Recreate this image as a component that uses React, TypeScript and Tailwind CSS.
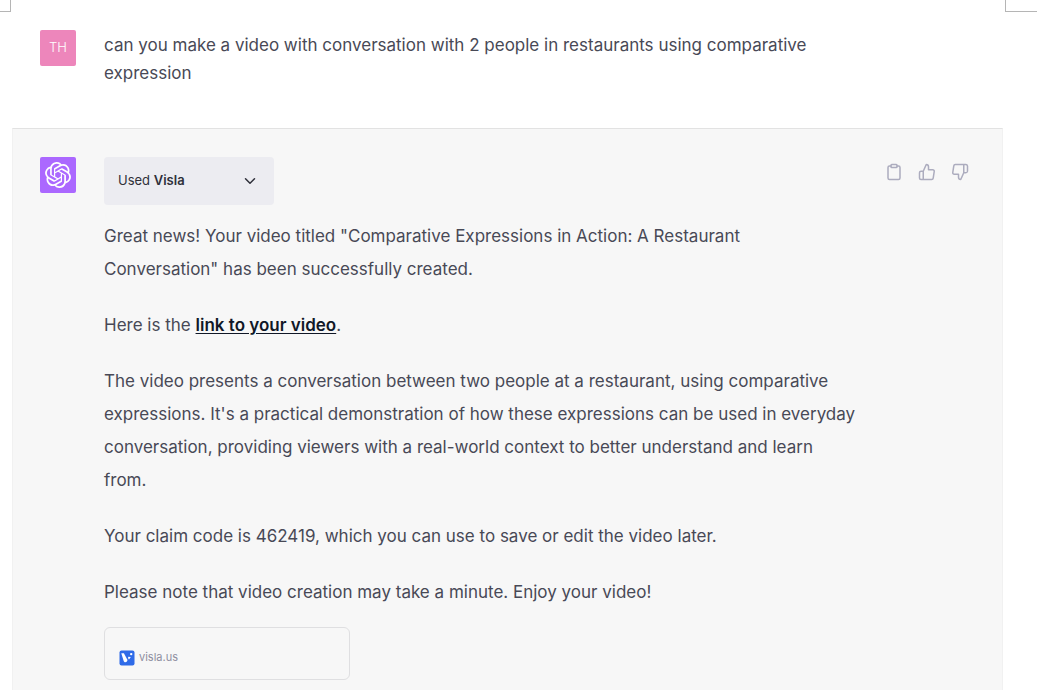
import React from "react";
import { FiChevronDown, FiClipboard, FiThumbsDown, FiThumbsUp } from "react-icons/fi";
import { SiOpenai } from "react-icons/si";

interface MessageProps {
    avatar: React.ReactNode;
    children: React.ReactNode;
}

const actions = [
    { label: "Copy", Icon: FiClipboard },
    { label: "Good response", Icon: FiThumbsUp },
    { label: "Bad response", Icon: FiThumbsDown },
];

const PageCorners: React.FC = () => (
    <div className="flex justify-between pr-[25px]">
        <div className="h-3 w-[11px] border-b border-r border-[#b5b5b5]" />
        <div className="h-3 w-8 border-b border-l border-[#b5b5b5]" />
    </div>
);

const Message: React.FC<MessageProps> = ({ avatar, children }) => (
    <div className="flex items-start gap-7">
        {avatar}
        {children}
    </div>
);

const VislaLogo: React.FC = () => (
    <svg viewBox="0 0 16 16" className="size-4" aria-hidden="true">
        <rect x="0.5" y="0.5" width="15" height="15" rx="2" fill="#2f6be8" />
        <path d="M2.3 3.2h2.6l3.6 6.9c-.5 1.5-1.1 2.2-2.1 2.2-.8 0-1.3-.5-1.7-1.4z" fill="#fff" />
        <path d="M9.3 6.7l2.5.3-1.8 2.6c-.8-.9-1.1-1.8-.7-2.9z" fill="#fff" />
        <circle cx="12.2" cy="4.1" r="1.2" fill="#fff" />
    </svg>
);

const App: React.FC = () => {
    return (
        <div className="bg-white font-['Inter','Liberation_Sans',sans-serif] text-[17px] text-[#484956]">
            <PageCorners />
            <main className="ml-3 mr-[59px]">
                <section className="px-7 pt-[18px] pb-[41px]">
                    <Message
                        avatar={
                            <div className="flex size-9 shrink-0 items-center justify-center rounded-xs bg-[#ed86bb] text-[13px] font-light text-white">TH</div>
                        }
                    >
                        <p className="max-w-[768px] pt-px leading-7">
                            can you make a video with conversation with 2 people in restaurants using comparative expression
                        </p>
                    </Message>
                </section>

                <section className="border-x border-t border-x-[#f1f1f1] border-t-[#e2e2e2] bg-[#f7f7f7] px-[27px] pt-7 pb-[10px]">
                    <Message
                        avatar={
                            <div className="flex size-9 shrink-0 items-center justify-center rounded-xs bg-[#ab68ff] text-white">
                                <SiOpenai className="size-[26px]" />
                            </div>
                        }
                    >
                        <div className="flex max-w-[768px] flex-1 flex-col items-start">
                            <button type="button" className="flex h-12 w-[170px] items-center justify-between rounded-sm bg-[#ececf1] px-[14px] text-[13px] text-[#2f303a]">
                                <span>Used <b className="font-semibold">Visla</b></span>
                                <FiChevronDown className="mr-px size-[18px]" />
                            </button>
                            <div className="mt-[15px] flex flex-col gap-[23px] leading-[33px]">
                                <p>
                                    Great news! Your video titled "Comparative Expressions in Action: A Restaurant<br />
                                    Conversation" has been successfully created.
                                </p>
                                <p>
                                    Here is the <a href="#video" className="font-semibold text-[#111827] underline underline-offset-2">link to your video</a>.
                                </p>
                                <p>
                                    The video presents a conversation between two people at a restaurant, using comparative expressions. It's a practical demonstration of how these expressions can be used in everyday conversation, providing viewers with a real-world context to better understand and learn<br />
                                    from.
                                </p>
                                <p>Your claim code is 462419, which you can use to save or edit the video later.</p>
                                <p>Please note that video creation may take a minute. Enjoy your video!</p>
                            </div>
                            <a href="#visla" className="mt-[18px] flex h-[53px] w-[246px] items-center gap-1 rounded-md border border-[#dfdfe1] px-[14px] pt-2 text-[11px] text-[#8e8ea0]">
                                <VislaLogo />
                                visla.us
                            </a>
                        </div>
                        <div className="-ml-3 mt-[6px] mr-[6px] flex gap-[15px] text-[#acacbe]">
                            {actions.map(({ label, Icon }) => (
                                <button key={label} type="button" aria-label={label}>
                                    <Icon className="size-[18px]" />
                                </button>
                            ))}
                        </div>
                    </Message>
                </section>
            </main>
        </div>
    );
};

export default App;
